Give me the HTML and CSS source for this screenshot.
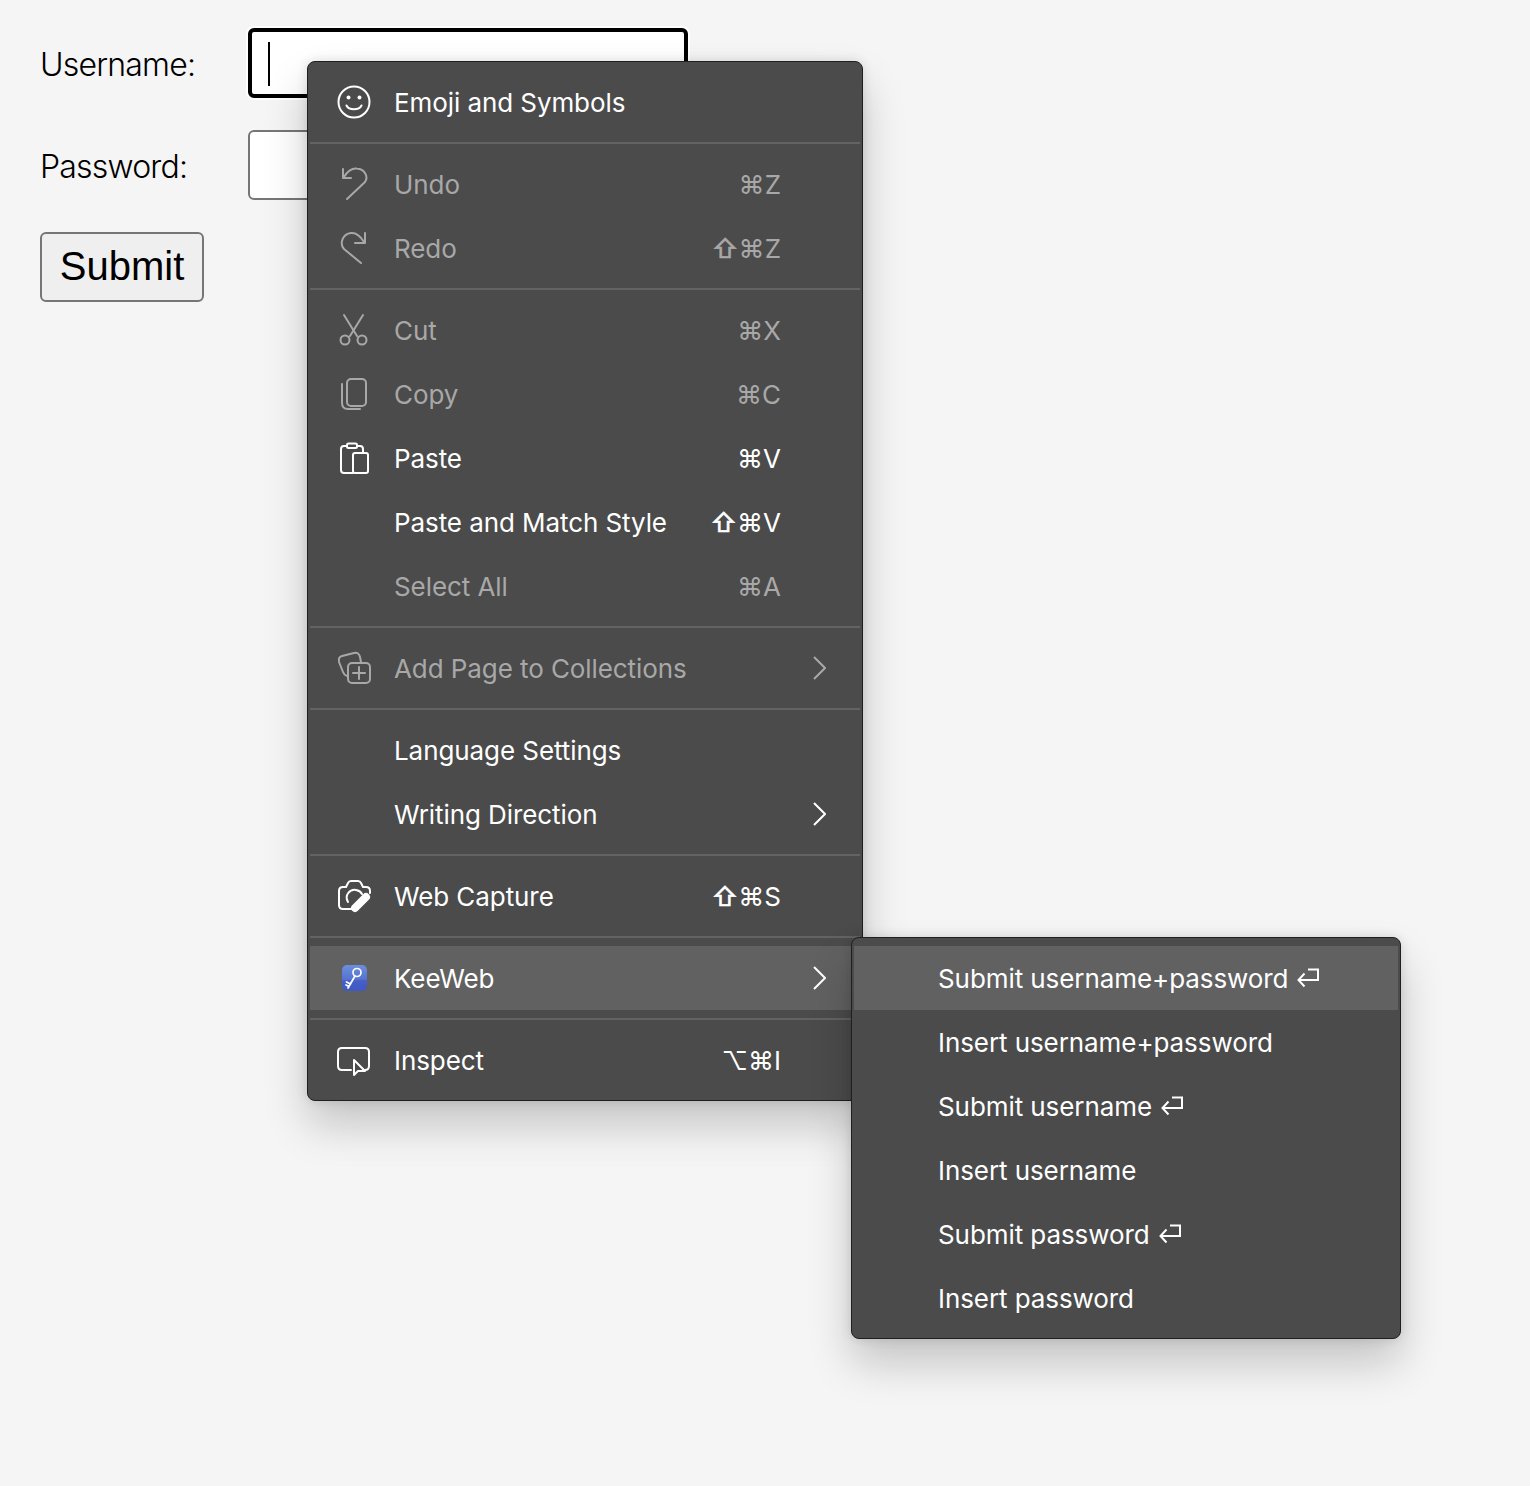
FILE: index.html
```html
<!DOCTYPE html>
<html lang="en">
<head>
  <meta charset="UTF-8" />
  <title>Login</title>
  <link rel="stylesheet" href="styles.css">
</head>
<body>
  <form class="login">
    <div class="field">
      <label>Username:</label>
      <div class="input-wrap">
        <input class="input focused" type="text" />
        <span class="caret"></span>
      </div>
    </div>
    <div class="field">
      <label>Password:</label>
      <div class="input-wrap">
        <input class="input" type="password" />
      </div>
    </div>
    <button class="submit" type="button">Submit</button>
  </form>

  <div class="menu main-menu">
    <div class="row">
      <svg class="icon" viewBox="0 0 36 36"><circle cx="18" cy="18" r="15.5"/><path d="M10.5 21.5 C13 26.5 23 26.5 25.5 21.5"/><circle class="solid" cx="12.5" cy="13.5" r="2"/><circle class="solid" cx="23.5" cy="13.5" r="2"/></svg>
      <span class="label">Emoji and Symbols</span>
    </div>
    <div class="sep"></div>
    <div class="row off">
      <svg class="icon" viewBox="0 -1 36 36"><path d="M11 32 L29 15 C33 9 28 2 21 1.5 C16 1 11 5 8 10"/><path d="M7 2 V11 H15"/></svg>
      <span class="label">Undo</span>
      <span class="keys">⌘Z</span>
    </div>
    <div class="row off">
      <svg class="icon" viewBox="0 -1 36 36"><path d="M25 32 L8 18 C3 12 7 3 15 2 C20 1.5 25 6 28 11"/><path d="M29 2 V12 H19"/></svg>
      <span class="label">Redo</span>
      <span class="keys"><span class="mod">⇧</span>⌘Z</span>
    </div>
    <div class="sep"></div>
    <div class="row off">
      <svg class="icon" viewBox="0 -1 36 36"><path d="M8 2 L21 23"/><path d="M27 2 L14 23"/><circle cx="9" cy="27" r="4.5"/><circle cx="26" cy="27" r="4.5"/></svg>
      <span class="label">Cut</span>
      <span class="keys">⌘X</span>
    </div>
    <div class="row off">
      <svg class="icon" viewBox="0 -1 36 36"><rect x="11" y="2" width="19" height="27" rx="4"/><path d="M6 7 V26 C6 30 8 32 12 32 H24"/></svg>
      <span class="label">Copy</span>
      <span class="keys">⌘C</span>
    </div>
    <div class="row">
      <svg class="icon" viewBox="0 -1 36 36"><path d="M11 5 H8 Q5 5 5 8 V29 Q5 32 8 32 H17"/><path d="M21 5 H24 Q27 5 27 8 V12"/><rect x="11" y="2.5" width="10" height="4.5" rx="1.5"/><rect x="17" y="12" width="15" height="20" rx="2"/></svg>
      <span class="label">Paste</span>
      <span class="keys">⌘V</span>
    </div>
    <div class="row indent">
      <span class="label">Paste and Match Style</span>
      <span class="keys"><span class="mod">⇧</span>⌘V</span>
    </div>
    <div class="row indent off">
      <span class="label">Select All</span>
      <span class="keys">⌘A</span>
    </div>
    <div class="sep"></div>
    <div class="row off sub">
      <svg class="icon" viewBox="0 -1 36 36"><rect x="12" y="12" width="22" height="20" rx="4"/><path d="M23 16 V28 M17 22 H29"/><path d="M11 25 Q8 24 7 21 L3 11 Q2 6 6 5 L18 2 Q23 1 24 6 L25 11"/></svg>
      <span class="label">Add Page to Collections</span>
      <svg class="chevron" viewBox="0 0 13 24"><path d="M1 1 L12 12 L1 23"/></svg>
    </div>
    <div class="sep"></div>
    <div class="row indent">
      <span class="label">Language Settings</span>
    </div>
    <div class="row indent sub">
      <span class="label">Writing Direction</span>
      <svg class="chevron" viewBox="0 0 13 24"><path d="M1 1 L12 12 L1 23"/></svg>
    </div>
    <div class="sep"></div>
    <div class="row">
      <svg class="icon" viewBox="0 -1 36 36"><path d="M15 30 H7 Q3 30 3 26 V12 Q3 8 7 8 H10 L12 4 Q13 2 15 2 H22 Q24 2 25 4 L27 8 H30 Q34 8 34 12 V14"/><path d="M12 23 C8 16 14 10 20 11 C23 11.5 25 13 26 15"/><path class="pencil" d="M19 29 L30 18"/></svg>
      <span class="label">Web Capture</span>
      <span class="keys"><span class="mod">⇧</span>⌘S</span>
    </div>
    <div class="sep"></div>
    <div class="row hot sub">
      <svg class="icon" viewBox="0 -1 36 36">
        <defs><linearGradient id="kw" x1="0" y1="0" x2="0" y2="1"><stop offset="0" stop-color="#6c8fdc"/><stop offset="0.55" stop-color="#5673d2"/><stop offset="0.6" stop-color="#4660c8"/><stop offset="1" stop-color="#3f58c2"/></linearGradient></defs>
        <rect class="logo" x="6" y="4" width="25" height="26" rx="5" fill="url(#kw)"/>
        <circle class="key" cx="21" cy="11.5" r="4"/><path class="key" d="M19 15 L12 27 M14.5 23 L10.5 21 M13 25.5 L10 24"/>
      </svg>
      <span class="label">KeeWeb</span>
      <svg class="chevron" viewBox="0 0 13 24"><path d="M1 1 L12 12 L1 23"/></svg>
    </div>
    <div class="sep"></div>
    <div class="row">
      <svg class="icon" viewBox="0 -1 36 36"><path d="M15 27 H6 Q2 27 2 23 V9 Q2 5 6 5 H29 Q33 5 33 9 V23 Q33 27 29 27 H28"/><path d="M18 17 V32 L22 28 H29 Z"/></svg>
      <span class="label">Inspect</span>
      <span class="keys">⌥⌘I</span>
    </div>
  </div>

  <div class="menu sub-menu">
    <div class="row hot">
      <span class="label">Submit username+password</span>
      <svg class="return" viewBox="0 0 22 20"><path d="M11 1.5 H21 V12 H1.5 M7.5 5.5 L1.5 12 L7.5 18.5"/></svg>
    </div>
    <div class="row">
      <span class="label">Insert username+password</span>
    </div>
    <div class="row">
      <span class="label">Submit username</span>
      <svg class="return" viewBox="0 0 22 20"><path d="M11 1.5 H21 V12 H1.5 M7.5 5.5 L1.5 12 L7.5 18.5"/></svg>
    </div>
    <div class="row">
      <span class="label">Insert username</span>
    </div>
    <div class="row">
      <span class="label">Submit password</span>
      <svg class="return" viewBox="0 0 22 20"><path d="M11 1.5 H21 V12 H1.5 M7.5 5.5 L1.5 12 L7.5 18.5"/></svg>
    </div>
    <div class="row">
      <span class="label">Insert password</span>
    </div>
  </div>
</body>
</html>
```

FILE: styles.css
```css
html, body {
  margin: 0;
  height: 100%;
}

body {
  background: #f5f5f5;
  font-family: Inter, "Liberation Sans", sans-serif;
  overflow: hidden;
}

.login {
  padding: 28px 40px;
  display: flex;
  flex-direction: column;
  align-items: flex-start;
  gap: 32px;
}

.field {
  display: flex;
  align-items: center;
}

.field label {
  width: 208px;
  padding-top: 2px;
  font-size: 32px;
  font-weight: 350;
  letter-spacing: -0.8px;
  color: #000;
}

.input-wrap {
  position: relative;
}

.input {
  display: block;
  box-sizing: border-box;
  width: 440px;
  height: 70px;
  background: #fff;
  border: 2px solid #767676;
  border-radius: 6px;
  outline: none;
}

.input.focused {
  border: 4px solid #000;
  box-shadow: 0 0 0 2px #fff;
}

.caret {
  position: absolute;
  left: 20px;
  top: 14px;
  width: 2px;
  height: 44px;
  background: #000;
}

.submit {
  box-sizing: border-box;
  width: 164px;
  height: 70px;
  padding: 0 0 2px;
  background: #efefef;
  border: 2px solid #767676;
  border-radius: 6px;
  font-family: "Liberation Sans", Arial, sans-serif;
  font-size: 40px;
  color: #000;
}

.menu {
  position: absolute;
  box-sizing: border-box;
  background: #4b4b4b;
  border: 1px solid #1f1f1f;
  border-radius: 8px;
  padding: 8px 2px;
  box-shadow: 0 24px 44px rgba(0, 0, 0, 0.2), 0 0 12px rgba(0, 0, 0, 0.12);
  color: #fff;
}

.main-menu {
  left: 307px;
  top: 61px;
  width: 556px;
  height: 1040px;
}

.sub-menu {
  left: 851px;
  top: 937px;
  width: 550px;
  height: 402px;
}

.row {
  display: flex;
  align-items: center;
  height: 64px;
  padding: 0 79px 0 26px;
  font-size: 26px;
  white-space: nowrap;
}

.row.indent {
  padding-left: 84px;
}

.row.sub {
  padding-right: 34px;
}

.row.off {
  color: #a8a8a8;
}

.row.hot {
  background: #616161;
}

.sub-menu .row {
  padding-left: 84px;
}

.sep {
  height: 2px;
  margin: 8px 0;
  background: #636363;
}

.label {
  letter-spacing: -0.08px;
}

.keys {
  margin-left: auto;
  font-family: Inter, "DejaVu Sans", sans-serif;
}

.mod {
  -webkit-text-stroke: 0.6px currentColor;
}

.icon {
  flex: none;
  width: 36px;
  height: 36px;
  margin-right: 22px;
  fill: none;
  stroke: currentColor;
  stroke-width: 2;
  stroke-linecap: round;
  stroke-linejoin: round;
}

.icon .solid {
  fill: currentColor;
  stroke: none;
}

.icon .pencil {
  stroke-width: 8;
}

.icon .logo {
  stroke: none;
}

.icon .key {
  stroke: #fff;
  stroke-width: 1.7;
}

.chevron {
  flex: none;
  width: 13px;
  height: 24px;
  margin-left: auto;
  fill: none;
  stroke: currentColor;
  stroke-width: 2;
}

.return {
  flex: none;
  width: 22px;
  height: 20px;
  margin-left: 9px;
  fill: none;
  stroke: currentColor;
  stroke-width: 2;
}
```
